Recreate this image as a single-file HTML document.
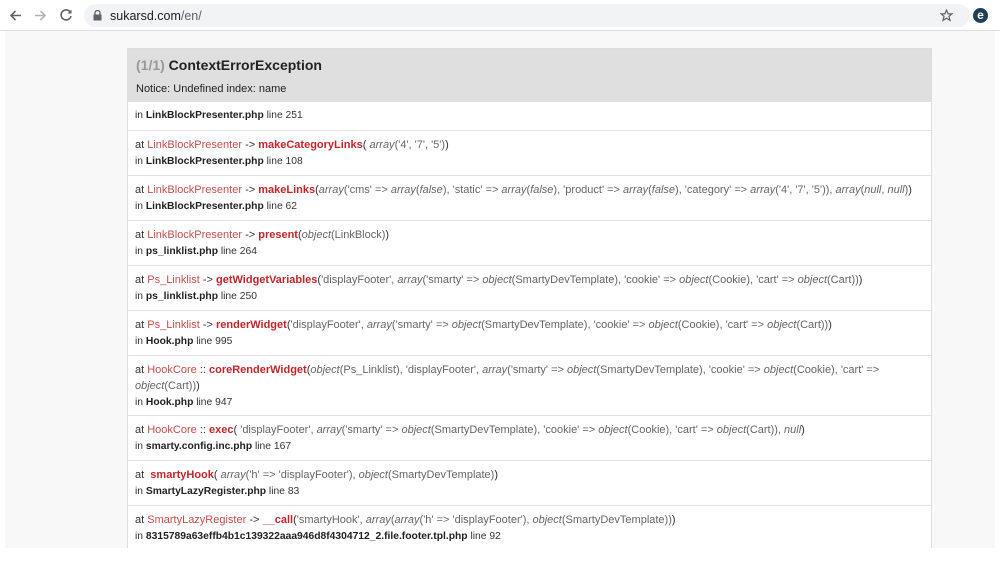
<!DOCTYPE html>
<html><head><meta charset="utf-8"><style>
*{margin:0;padding:0;box-sizing:border-box}
body{width:1000px;height:573px;overflow:hidden;background:#fff;font-family:"Liberation Sans",Arial,sans-serif;position:relative}
.bar{position:absolute;left:0;top:0;width:1000px;height:31px;background:#fff;border-bottom:1px solid #dadce0}
.url{position:absolute;left:84px;top:4px;width:886px;height:23px;background:#f1f3f4;border-radius:12px}
.url span{position:absolute;left:26px;top:5px;font-size:12.5px;color:#202124}
.url span i{font-style:normal;color:#5f6368}
.page{position:absolute;left:5px;top:31px;width:990px;height:517px;background:#f8f8f8}
.box{position:absolute;left:127px;top:48px;width:805px;border:1px solid #ddd;background:#fff}
.hd{background:#dfdfdf;height:53px;padding:8px 8px 0}
.hd h1{font-size:14px;color:#222;font-weight:bold;line-height:16px}
.hd h1 b{color:#999}
.hd p{font-size:11px;color:#222;margin-top:10px}
.row{border-top:1px solid #e2e2e2;padding:6px 8px 0 7px;font-size:11px;line-height:16px;color:#333;height:45px}
.row.r1{height:28px;border-top:none}
.row.r3{height:60px}
.c{color:#c0504d}.m{color:#c0262b;font-weight:bold}.g{color:#666}.g em{font-style:italic}
.f{font-size:10.3px}
.f b{color:#222}
</style></head><body>
<div class="bar">
<svg style="position:absolute;left:9px;top:9px" width="13" height="13" viewBox="0 0 13 13"><path d="M12 6.5H2M6.5 2L2 6.5 6.5 11" stroke="#5f6368" stroke-width="1.6" fill="none"/></svg>
<svg style="position:absolute;left:34px;top:9px" width="13" height="13" viewBox="0 0 13 13"><path d="M1 6.5H11M6.5 2L11 6.5 6.5 11" stroke="#b0b3b8" stroke-width="1.6" fill="none"/></svg>
<svg style="position:absolute;left:59px;top:8px" width="14" height="14" viewBox="0 0 14 14"><path d="M11.5 4.5A5 5 0 1 0 12 8" stroke="#5f6368" stroke-width="1.6" fill="none"/><path d="M12.5 1.5V5.5H8.5Z" fill="#5f6368"/></svg>
<div class="url"><svg style="position:absolute;left:9px;top:6px" width="9" height="11" viewBox="0 0 9 11"><rect x="0.5" y="4.5" width="8" height="6" fill="#5f6368"/><path d="M2 5V3a2.5 2.5 0 0 1 5 0v2" stroke="#5f6368" stroke-width="1.3" fill="none"/></svg><span>sukarsd.com<i>/en/</i></span>
<svg style="position:absolute;left:856px;top:5px" width="13" height="13" viewBox="0 0 24 24"><path d="M12 2l3 7h7l-5.5 4.5 2 7.5L12 17l-6.5 4 2-7.5L2 9h7z" stroke="#5f6368" stroke-width="2.2" fill="none"/></svg></div>
<div style="position:absolute;left:973px;top:8px;width:15px;height:15px;border-radius:50%;background:#1f3f57;color:#fff;font-size:12px;font-weight:bold;text-align:center;line-height:14px">e</div>
</div>
<div class="page"></div>
<div class="box">
<div class="hd"><h1><b>(1/1)</b> ContextErrorException</h1><p>Notice: Undefined index: name</p></div>
<div class="row r1 f">in <b>LinkBlockPresenter.php</b> line 251</div>
<div class="row">at <span class="c">LinkBlockPresenter</span> -&gt; <span class="m">makeCategoryLinks</span>( <span class="g"><em>array</em>('4', '7', '5')</span>)<br><span class="f">in <b>LinkBlockPresenter.php</b> line 108</span></div>
<div class="row">at <span class="c">LinkBlockPresenter</span> -&gt; <span class="m">makeLinks</span>(<span class="g"><em>array</em>('cms' =&gt; <em>array</em>(<em>false</em>), 'static' =&gt; <em>array</em>(<em>false</em>), 'product' =&gt; <em>array</em>(<em>false</em>), 'category' =&gt; <em>array</em>('4', '7', '5')), <em>array</em>(<em>null</em>, <em>null</em>)</span>)<br><span class="f">in <b>LinkBlockPresenter.php</b> line 62</span></div>
<div class="row">at <span class="c">LinkBlockPresenter</span> -&gt; <span class="m">present</span>(<span class="g"><em>object</em>(LinkBlock)</span>)<br><span class="f">in <b>ps_linklist.php</b> line 264</span></div>
<div class="row">at <span class="c">Ps_Linklist</span> -&gt; <span class="m">getWidgetVariables</span>(<span class="g">'displayFooter', <em>array</em>('smarty' =&gt; <em>object</em>(SmartyDevTemplate), 'cookie' =&gt; <em>object</em>(Cookie), 'cart' =&gt; <em>object</em>(Cart))</span>)<br><span class="f">in <b>ps_linklist.php</b> line 250</span></div>
<div class="row">at <span class="c">Ps_Linklist</span> -&gt; <span class="m">renderWidget</span>(<span class="g">'displayFooter', <em>array</em>('smarty' =&gt; <em>object</em>(SmartyDevTemplate), 'cookie' =&gt; <em>object</em>(Cookie), 'cart' =&gt; <em>object</em>(Cart))</span>)<br><span class="f">in <b>Hook.php</b> line 995</span></div>
<div class="row r3">at <span class="c">HookCore</span> :: <span class="m">coreRenderWidget</span>(<span class="g"><em>object</em>(Ps_Linklist), 'displayFooter', <em>array</em>('smarty' =&gt; <em>object</em>(SmartyDevTemplate), 'cookie' =&gt; <em>object</em>(Cookie), 'cart' =&gt; <em>object</em>(Cart))</span>)<br><span class="f">in <b>Hook.php</b> line 947</span></div>
<div class="row">at <span class="c">HookCore</span> :: <span class="m">exec</span>(<span class="g"> 'displayFooter', <em>array</em>('smarty' =&gt; <em>object</em>(SmartyDevTemplate), 'cookie' =&gt; <em>object</em>(Cookie), 'cart' =&gt; <em>object</em>(Cart)), <em>null</em></span>)<br><span class="f">in <b>smarty.config.inc.php</b> line 167</span></div>
<div class="row">at &nbsp;<span class="m">smartyHook</span>(<span class="g"> <em>array</em>('h' =&gt; 'displayFooter'), <em>object</em>(SmartyDevTemplate)</span>)<br><span class="f">in <b>SmartyLazyRegister.php</b> line 83</span></div>
<div class="row" style="height:43px">at <span class="c">SmartyLazyRegister</span> -&gt; <span class="m">__call</span>(<span class="g">'smartyHook', <em>array</em>(<em>array</em>('h' =&gt; 'displayFooter'), <em>object</em>(SmartyDevTemplate))</span>)<br><span class="f">in <b>8315789a63effb4b1c139322aaa946d8f4304712_2.file.footer.tpl.php</b> line 92</span></div>
</div>
<div style="position:absolute;left:5px;top:548px;width:990px;height:25px;background:#fff"></div>
</body></html>
